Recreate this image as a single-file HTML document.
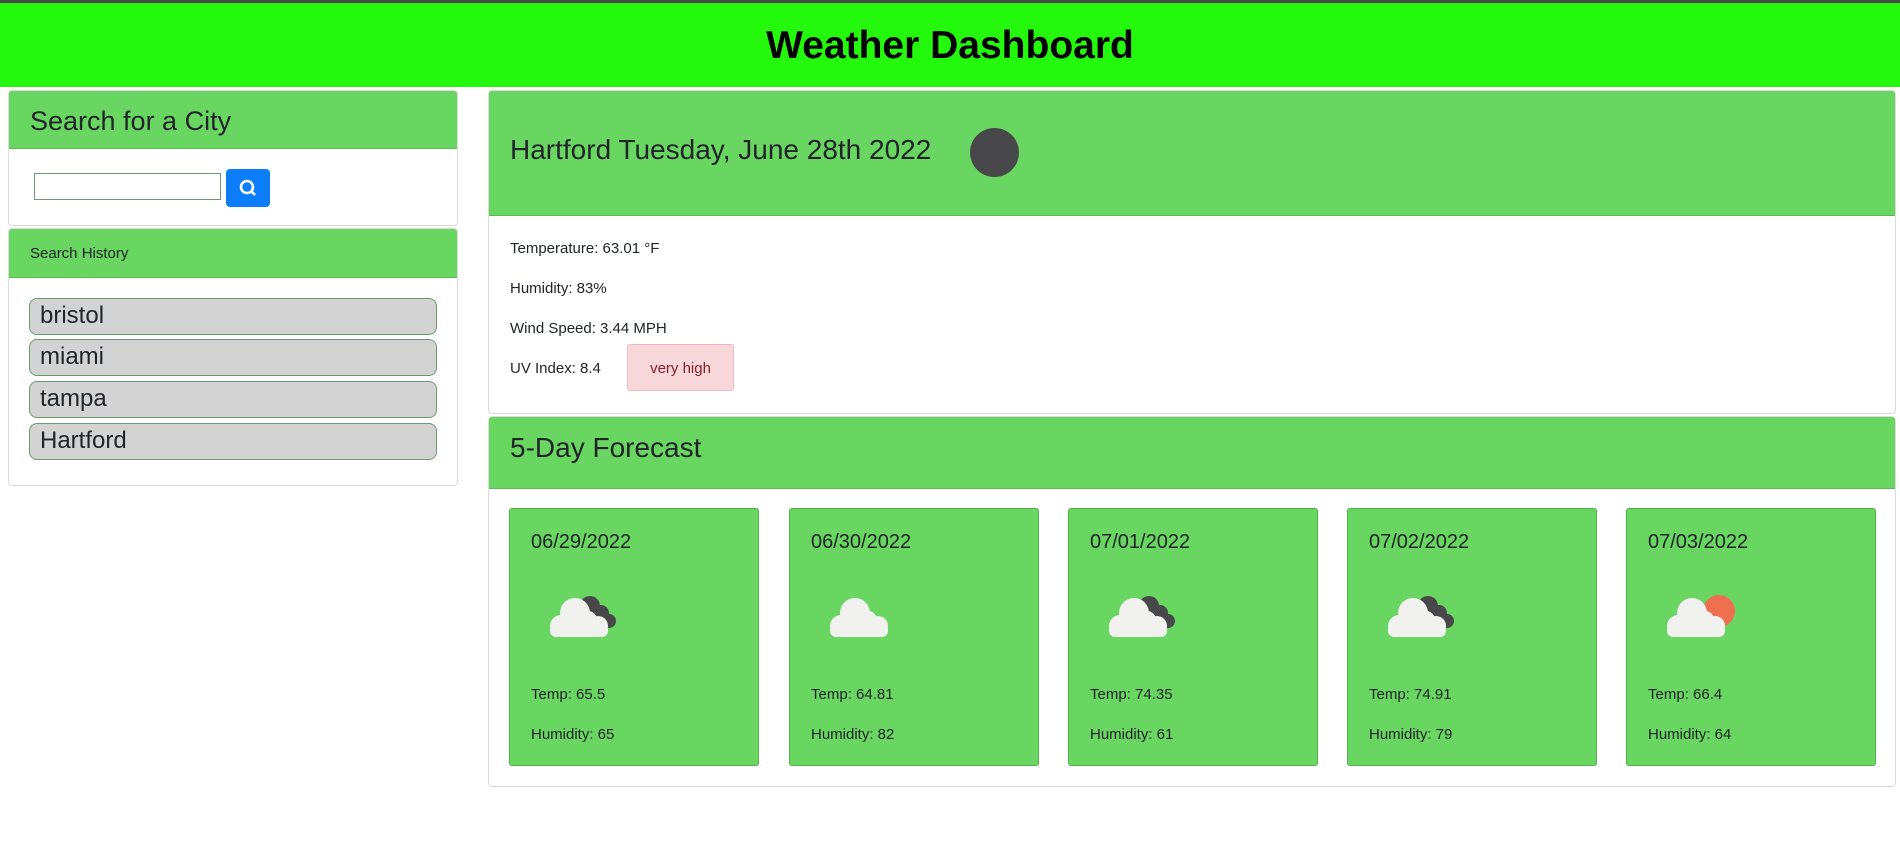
<!DOCTYPE html>
<html><head><meta charset="utf-8"><style>
*{box-sizing:border-box;margin:0;padding:0}
body{width:1900px;height:862px;background:#fff;font-family:"Segoe UI","Liberation Sans",sans-serif;color:#212529;position:relative;overflow:hidden}
.topline{position:absolute;left:0;top:0;width:1900px;height:3px;background:#4a4a4a}
.hdr{position:absolute;left:0;top:3px;width:1900px;height:84px;background:#24f80c;text-align:center;font-weight:bold;font-size:39px;line-height:86px;color:#000}
.card{position:absolute;border:1px solid #dcdcdc;border-radius:4px;background:#fff;overflow:hidden}
.ch{background:#69d662;border-bottom:1px solid #58c050}
.abs{position:absolute}
.hist{position:absolute;left:20px;width:408px;height:37px;background:#d3d3d3;border:1px solid #6d9a6d;border-radius:8px;font-size:24px;padding-left:10px;line-height:33px;font-weight:500}
.fc{position:absolute;top:508px;width:250px;height:258px;background:#69d662;border:1px solid #4fb34a;border-radius:3px}
.fc .d{position:absolute;left:21px;top:22px;font-size:20px}
.fc .t{position:absolute;left:21px;top:177px;font-size:15px}
.fc .h{position:absolute;left:21px;top:217px;font-size:15px}
.fc svg{position:absolute;left:36px;top:80px}
</style></head><body>
<div class="topline"></div>
<div class="hdr">Weather Dashboard</div>

<div class="card" style="left:8px;top:90px;width:450px;height:136px">
 <div class="ch" style="height:58px;font-size:27px;padding:15px 0 0 21px">Search for a City</div>
 <div class="abs" style="left:25px;top:82px;width:187px;height:27px;border:1px solid #6d9a6d"></div>
 <div class="abs" style="left:217px;top:78px;width:44px;height:38px;background:#0b7dfb;border-radius:4px">
  <svg width="44" height="38"><circle cx="21" cy="18" r="6" fill="none" stroke="#fff" stroke-width="2.6"/><line x1="25" y1="22" x2="29" y2="26" stroke="#fff" stroke-width="2.6"/></svg>
 </div>
</div>

<div class="card" style="left:8px;top:228px;width:450px;height:258px">
 <div class="ch" style="height:49px;font-size:15px;padding:16px 0 0 21px">Search History</div>
 <div class="hist" style="top:69px">bristol</div>
 <div class="hist" style="top:110px">miami</div>
 <div class="hist" style="top:152px">tampa</div>
 <div class="hist" style="top:194px">Hartford</div>
</div>

<div class="card" style="left:488px;top:90px;width:1408px;height:324px">
 <div class="ch" style="height:125px;font-size:28px;padding:43px 0 0 21px">Hartford Tuesday, June 28th 2022</div>
 <div class="abs" style="left:481px;top:37px;width:49px;height:49px;border-radius:50%;background:#48484a"></div>
 <div class="abs" style="left:21px;top:149px;font-size:15px">Temperature: 63.01 °F</div>
 <div class="abs" style="left:21px;top:189px;font-size:15px">Humidity: 83%</div>
 <div class="abs" style="left:21px;top:229px;font-size:15px">Wind Speed: 3.44 MPH</div>
 <div class="abs" style="left:21px;top:269px;font-size:15px">UV Index: 8.4</div>
 <div class="abs" style="left:138px;top:253px;width:107px;height:47px;background:#f8d7da;border:1px solid #f1b8be;border-radius:3px;color:#842029;font-size:15px;text-align:center;line-height:47px">very high</div>
</div>

<div class="card" style="left:488px;top:416px;width:1408px;height:371px">
 <div class="ch" style="height:72px;font-size:28px;padding:15px 0 0 21px">5-Day Forecast</div>
</div>

<svg width="0" height="0" style="position:absolute"><defs>
 <g id="cl"><circle cx="15" cy="37" r="11" fill="#f1f1f0"/><circle cx="29" cy="24" r="15" fill="#f1f1f0"/><circle cx="42" cy="31" r="9" fill="#f1f1f0"/><circle cx="52" cy="37" r="10" fill="#f1f1f0"/><rect x="4" y="35" width="58" height="13" rx="6" fill="#f1f1f0"/></g>
 <g id="dk"><circle cx="44" cy="17" r="10" fill="#48484a"/><circle cx="55" cy="24" r="8" fill="#48484a"/><circle cx="63" cy="32" r="7" fill="#48484a"/></g>
</defs></svg>

<div class="fc" style="left:509px"><div class="d">06/29/2022</div><svg width="80" height="60"><use href="#dk"/><use href="#cl"/></svg><div class="t">Temp: 65.5</div><div class="h">Humidity: 65</div></div>
<div class="fc" style="left:789px"><div class="d">06/30/2022</div><svg width="80" height="60"><use href="#cl"/></svg><div class="t">Temp: 64.81</div><div class="h">Humidity: 82</div></div>
<div class="fc" style="left:1068px"><div class="d">07/01/2022</div><svg width="80" height="60"><use href="#dk"/><use href="#cl"/></svg><div class="t">Temp: 74.35</div><div class="h">Humidity: 61</div></div>
<div class="fc" style="left:1347px"><div class="d">07/02/2022</div><svg width="80" height="60"><use href="#dk"/><use href="#cl"/></svg><div class="t">Temp: 74.91</div><div class="h">Humidity: 79</div></div>
<div class="fc" style="left:1626px"><div class="d">07/03/2022</div><svg width="80" height="60"><circle cx="56" cy="22" r="16" fill="#ef7050"/><use href="#cl"/></svg><div class="t">Temp: 66.4</div><div class="h">Humidity: 64</div></div>
</body></html>
